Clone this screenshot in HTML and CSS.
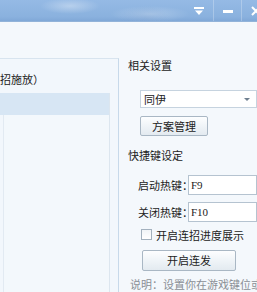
FILE: index.html
```html
<!DOCTYPE html>
<html lang="zh-CN">
<head>
    <meta charset="UTF-8">
    <title>连招设置</title>
    <link rel="stylesheet" href="styles.css">
</head>
<body>
    <div class="window">
        <div class="titlebar">
            <div class="tb-btn">
                <svg width="10" height="8" viewBox="0 0 10 8"><rect x="0" y="0" width="10" height="2" fill="#fff"/><path d="M1 3.5 L9 3.5 L5 8 Z" fill="#fff"/></svg>
            </div>
            <div class="tb-btn">
                <svg width="10" height="3" viewBox="0 0 10 3"><rect x="0" y="0" width="10" height="3" fill="#fff"/></svg>
            </div>
            <div class="tb-btn">
                <svg width="10" height="10" viewBox="0 0 10 10"><path d="M1 1 L9 9 M9 1 L1 9" stroke="#fff" stroke-width="2"/></svg>
            </div>
        </div>

        <div class="main">
            <div class="left">
                <div class="group">
                    <div class="group-label">招施放）</div>
                    <div class="list">
                        <div class="list-item selected"></div>
                    </div>
                </div>
            </div>

            <div class="right">
                <div class="section-title">相关设置</div>
                <div class="select">
                    <span>同伊</span>
                    <span class="arrow"></span>
                </div>
                <button class="btn btn-small">方案管理</button>

                <div class="section-title hotkeys">快捷键设定</div>
                <div class="field">
                    <span class="field-label">启动热键：</span>
                    <div class="input">F9</div>
                </div>
                <div class="field second">
                    <span class="field-label">关闭热键：</span>
                    <div class="input">F10</div>
                </div>

                <label class="check">
                    <span class="box"></span>
                    <span>开启连招进度展示</span>
                </label>

                <button class="btn btn-big">开启连发</button>

                <div class="note">说明：设置你在游戏键位或者</div>
            </div>
        </div>
    </div>
</body>
</html>
```

FILE: styles.css
```css
* {
    box-sizing: border-box;
}

body {
    margin: 0;
    overflow: hidden;
    font-family: "Noto Sans CJK SC", "Microsoft YaHei", sans-serif;
    font-size: 11px;
    color: #222;
    background: #f4f8fc;
}

.window {
    width: 269px;
    height: 292px;
    display: flex;
    flex-direction: column;
    background: #f4f8fc;
}

/* Title bar */
.titlebar {
    height: 22px;
    flex-shrink: 0;
    display: flex;
    justify-content: flex-end;
    background:
        radial-gradient(ellipse 30px 8px at 70px 6px, rgba(255,255,255,0.35), transparent),
        radial-gradient(ellipse 40px 8px at 150px 14px, rgba(255,255,255,0.25), transparent),
        radial-gradient(ellipse 25px 12px at 145px 18px, rgba(120,160,210,0.5), transparent),
        linear-gradient(180deg, #95bae5 0%, #8ab1de 80%, #80a8d7 100%);
    border-bottom: 1px solid #92b3d9;
}

.tb-btn {
    width: 28px;
    height: 21px;
    display: flex;
    align-items: center;
    justify-content: center;
    padding-top: 1px;
    border-left: 1px solid rgba(255, 255, 255, 0.25);
}

.tb-btn:first-child {
    border-left: none;
}

/* Body */
.main {
    flex: 1;
    display: flex;
    min-height: 0;
}

.left {
    width: 119px;
    flex-shrink: 0;
    padding-top: 36px;
    display: flex;
}

.group {
    flex: 1;
    display: flex;
    flex-direction: column;
    border-top: 1px solid #d8e4ef;
    border-right: 1px solid #c7d9ea;
    background: #f2f7fc;
}

.group-label {
    height: 34px;
    padding-top: 12px;
    line-height: 16px;
}

.list {
    flex: 1;
    width: 107px;
    margin-left: 3px;
    border-left: 1px solid #e2eaf2;
    border-right: 1px solid #dce6ef;
    background: #f3f8fc;
}

.list-item {
    height: 22px;
    margin-left: -4px;
}

.list-item.selected {
    background: #d7e6f4;
}

.right {
    flex: 1;
    min-width: 0;
    overflow: hidden;
    padding: 35px 0 0 9px;
    display: flex;
    flex-direction: column;
    align-items: flex-start;
}

.section-title {
    line-height: 16px;
}

.section-title.hotkeys {
    margin-top: 11px;
}

.select {
    width: 117px;
    height: 19px;
    margin: 17px 0 0 12px;
    padding: 0 6px 0 3px;
    display: flex;
    align-items: center;
    justify-content: space-between;
    background: #fff;
    border: 1px solid #c6d3df;
}

.arrow {
    width: 0;
    height: 0;
    border-left: 3px solid transparent;
    border-right: 3px solid transparent;
    border-top: 3px solid #6f7f8f;
}

.btn {
    font-family: inherit;
    font-size: 11px;
    color: #222;
    padding: 0;
    border: 1px solid #a9b7c4;
    border-radius: 2px;
    background: linear-gradient(180deg, #fdfeff 0%, #eef3f7 55%, #e3eaf0 100%);
}

.btn-small {
    width: 68px;
    height: 21px;
    margin: 8px 0 0 12px;
}

.btn-big {
    width: 94px;
    height: 23px;
    margin: 7px 0 0 14px;
}

.field {
    display: flex;
    align-items: center;
    margin: 12px 0 0 10px;
}

.field.second {
    margin-top: 7px;
}

.field-label {
    width: 50px;
    white-space: nowrap;
    font-feature-settings: "halt";
}

.input {
    width: 69px;
    height: 20px;
    padding-left: 2px;
    line-height: 18px;
    font-family: "Liberation Serif", serif;
    font-size: 11px;
    background: #fff;
    border: 1px solid #b5c3d0;
}

.check {
    display: flex;
    align-items: center;
    gap: 4px;
    margin: 5px 0 0 13px;
    line-height: 16px;
}

.box {
    width: 11px;
    height: 11px;
    border: 1px solid #a3b1be;
    background: linear-gradient(180deg, #f1f4f7, #fff);
}

.note {
    margin: 5px 0 0 2px;
    line-height: 16px;
    color: #8a8f95;
    white-space: nowrap;
}
```
